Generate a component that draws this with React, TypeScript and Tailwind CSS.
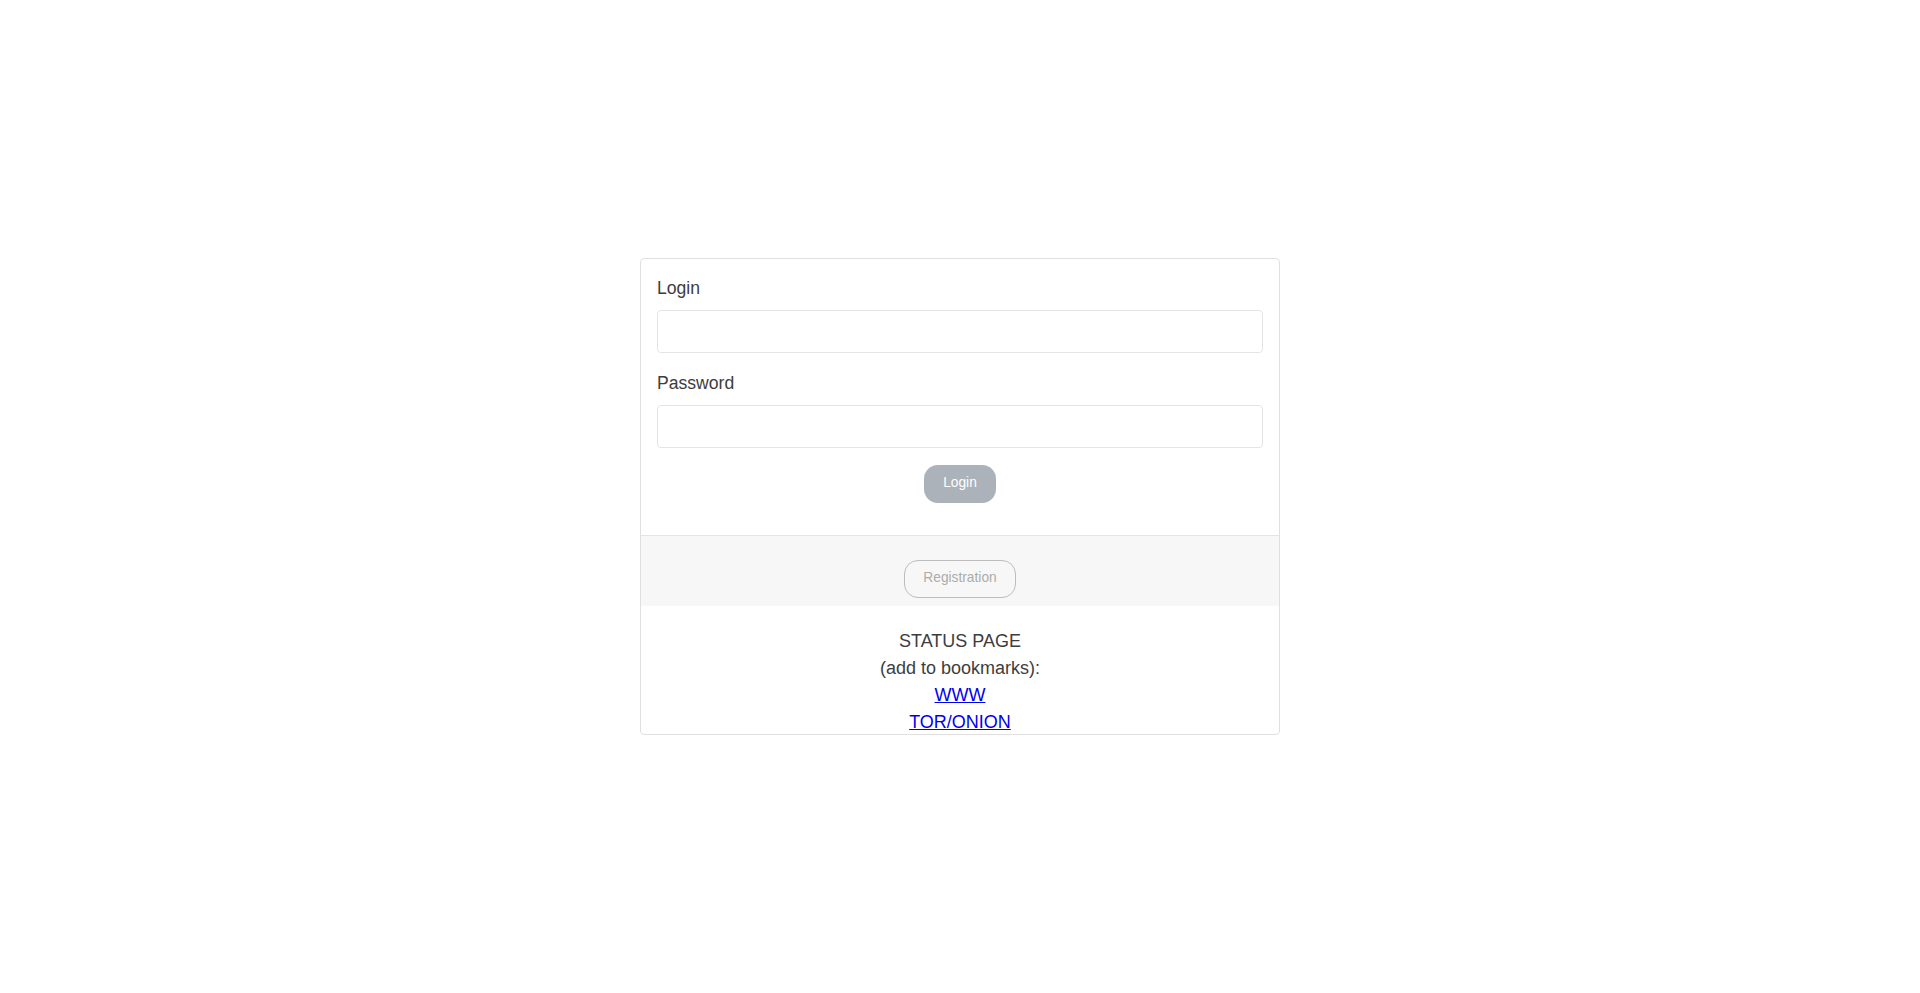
export default function App() {
  return (
    <div className="flex h-[993px] w-full items-center justify-center bg-white font-['Liberation_Sans',Arial,sans-serif] text-[17.6px] leading-[26.4px] text-[#3d3d3d]">
      <div className="flex w-[640px] flex-col overflow-hidden rounded-[4px] border border-[#e0e0e0] bg-white">
        <form className="flex flex-col px-4 pt-4 pb-[32px]" onSubmit={(e) => e.preventDefault()}>
          <label className="mb-[8px] h-[26.4px]">Login</label>
          <input
            type="text"
            className="h-[43px] w-full rounded-[4px] border border-[#e4e4e4] px-3 outline-none"
          />
          <label className="mt-[17px] mb-[8.6px] h-[26.4px]">Password</label>
          <input
            type="password"
            className="h-[43px] w-full rounded-[4px] border border-[#e4e4e4] px-3 outline-none"
          />
          <div className="mt-[17px] flex justify-center">
            <button
              type="submit"
              disabled
              className="h-[38px] w-[72px] rounded-[14px] bg-[#abb2b9] text-[13.75px] text-white"
            >
              Login
            </button>
          </div>
        </form>

        <div className="flex h-[71px] justify-center border-t border-[#e4e4e4] bg-[#f7f7f7] pt-[24px]">
          <button
            type="button"
            className="h-[38px] w-[112px] rounded-[14px] border border-[#bcbcbc] text-[13.75px] text-[#acacac]"
          >
            Registration
          </button>
        </div>

        <div className="flex h-[128px] flex-col items-center pt-[22.4px] text-center text-[18px] leading-[27px]">
          <span>STATUS PAGE</span>
          <span>(add to bookmarks):</span>
          <a href="#" className="text-[#0000ee] underline">
            WWW
          </a>
          <a href="#" className="text-[#0000ee] underline">
            TOR/ONION
          </a>
        </div>
      </div>
    </div>
  );
}
